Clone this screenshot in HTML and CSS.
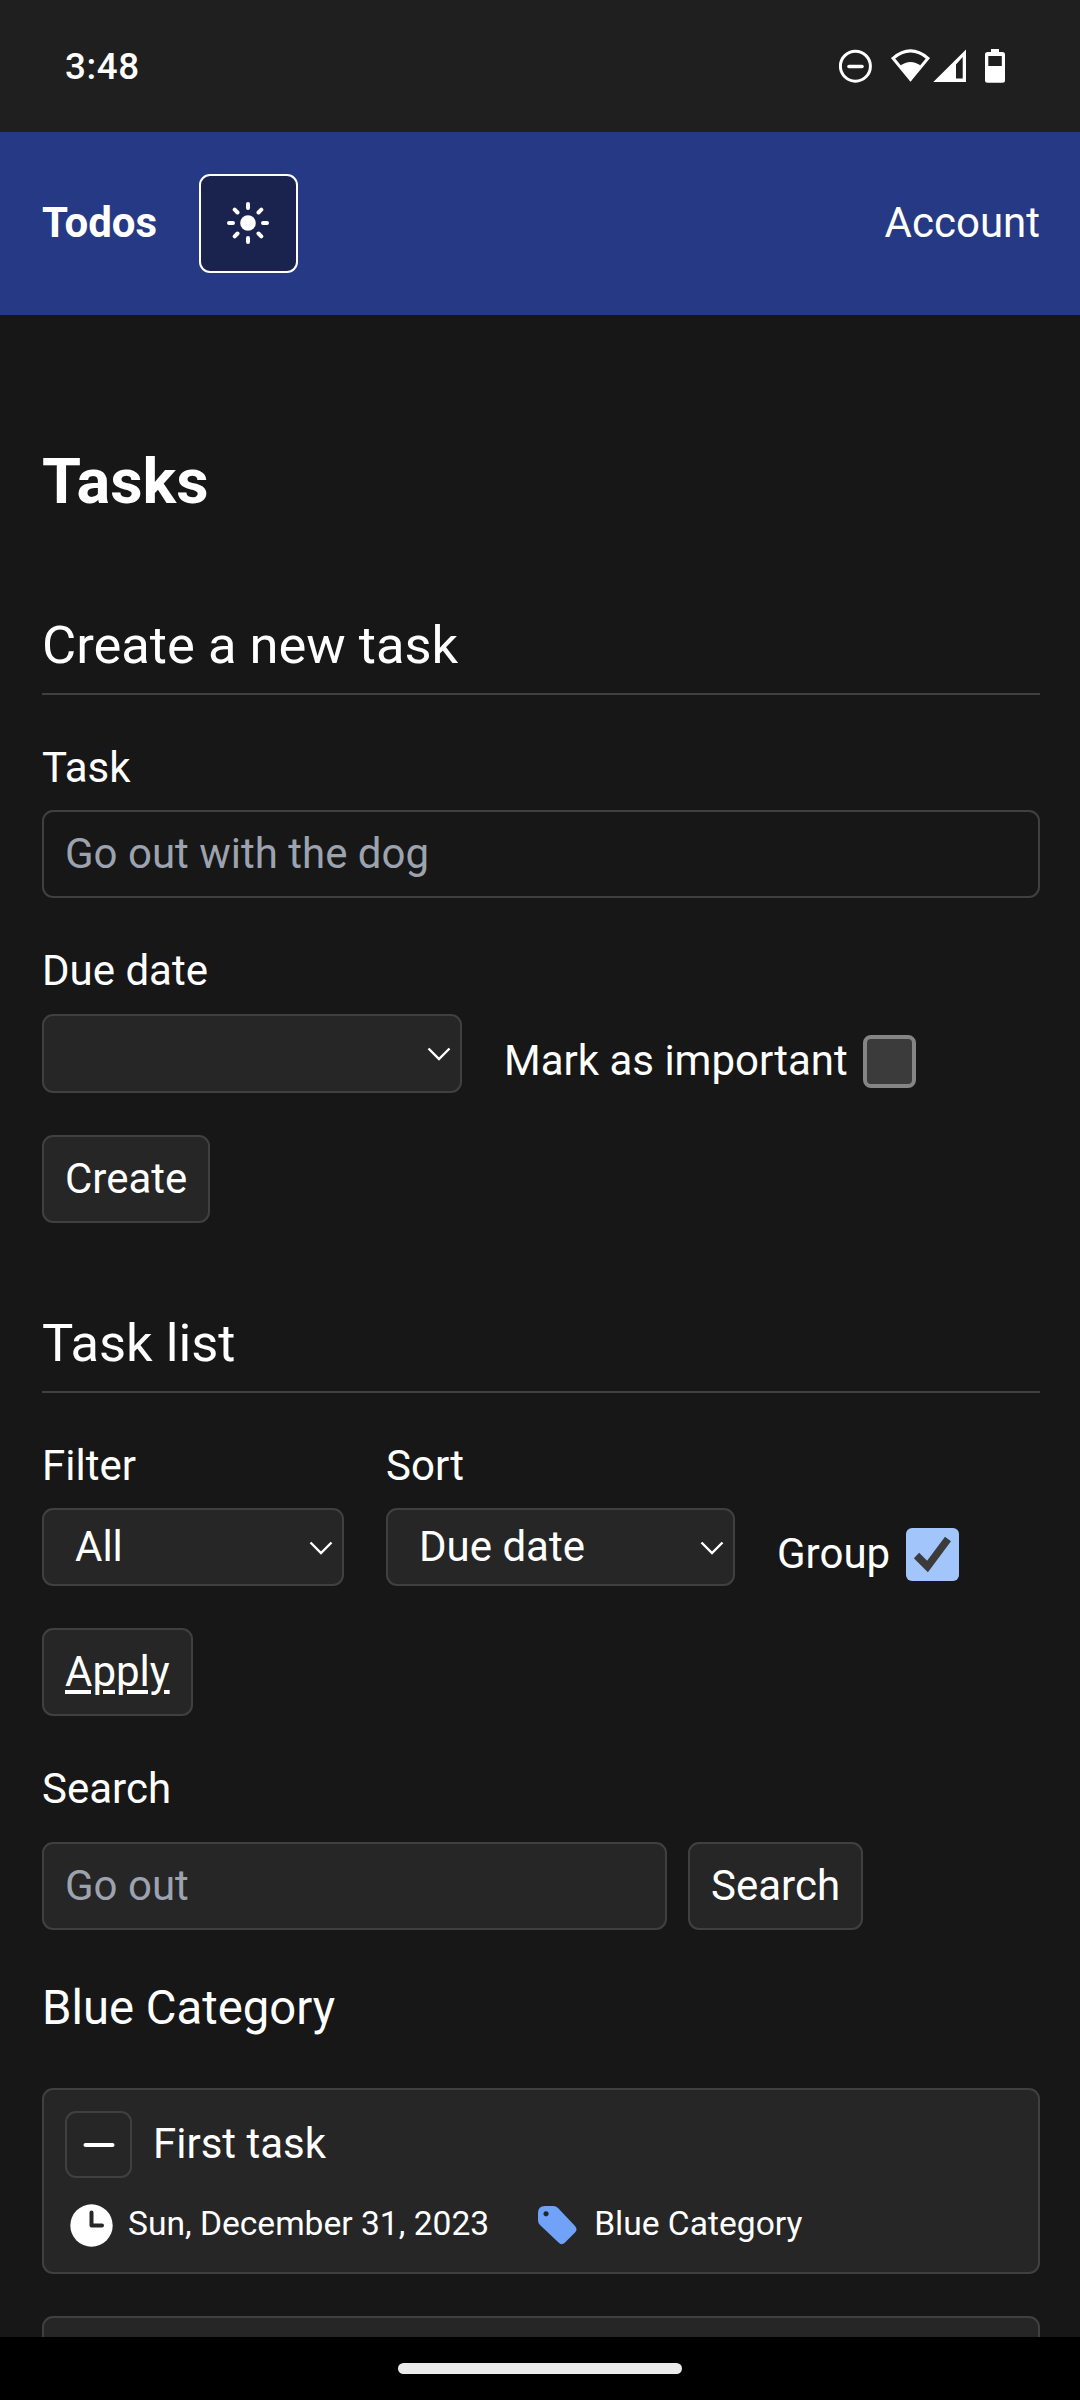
FILE: index.html
```html
<!DOCTYPE html>
<html lang="en">
<head>
<meta charset="utf-8">
<title>Todos</title>
<link rel="stylesheet" href="styles.css">
</head>
<body>
<div class="status">
  <span class="clock">3:48</span>
  <svg class="status-icons" width="170" height="36" viewBox="0 0 170 36">
    <circle cx="16.400" cy="18.200" r="15" fill="none" stroke="#fff" stroke-width="3"/>
    <path d="M10 18.500h13" stroke="#fff" stroke-width="3.600" stroke-linecap="round"/>
    <path d="M54 10.300Q71.500 -4.500 89 10.300L71.500 31.500Z" fill="none" stroke="#fff" stroke-width="3" stroke-linejoin="miter"/>
    <path d="M61 18Q71.500 10 82 18L71.500 33.500Z" fill="#fff"/>
    <path fill-rule="evenodd" d="M94.300 34L127 1.500V34ZM117 16.500V30.500H123.700V9Z" fill="#fff"/>
    <path fill-rule="evenodd" d="M152 1h8v3h3.500q2.500 0 2.500 2.500V32.300Q166 34.800 163.500 34.800H148.500Q146 34.800 146 32.300V6.500Q146 4 148.500 4H152ZM149.300 8V18H162.800V8Z" fill="#fff"/>
  </svg>
</div>
<header class="nav">
  <a class="brand">Todos</a>
  <button class="theme" aria-label="Toggle theme">
    <svg width="42" height="42" viewBox="0 0 42 42">
      <circle cx="21" cy="21" r="7.800" fill="#fff"/>
      <path d="M21 2v4M21 36v4M2 21h4M36 21h4M7.700 7.700l2.800 2.800M31.500 31.500l2.800 2.800M7.700 34.300l2.800-2.800M31.500 10.500l2.800-2.800" stroke="#fff" stroke-width="4" stroke-linecap="round"/>
    </svg>
  </button>
  <a class="account">Account</a>
</header>
<main class="page">
  <h1>Tasks</h1>
  <h2>Create a new task</h2>
  <form class="create">
    <label class="label">Task</label>
    <div class="box field">Go out with the dog</div>
    <div class="row due-row">
      <div class="group">
        <label class="label due-label">Due date</label>
        <div class="box select due"><svg class="chevron" width="24" height="14" viewBox="0 0 24 14"><path d="M1.500 1.500L12 12L22.500 1.500"/></svg></div>
      </div>
      <label class="check"><span class="check-text">Mark as important</span><span class="checkbox"></span></label>
    </div>
    <button type="button" class="box button">Create</button>
  </form>
  <h2 class="list-title">Task list</h2>
  <form class="filters">
    <div class="row">
      <div class="group">
        <label class="label">Filter</label>
        <div class="box select filter">All<svg class="chevron" width="24" height="14" viewBox="0 0 24 14"><path d="M1.500 1.500L12 12L22.500 1.500"/></svg></div>
      </div>
      <div class="group">
        <label class="label">Sort</label>
        <div class="box select sort">Due date<svg class="chevron" width="24" height="14" viewBox="0 0 24 14"><path d="M1.500 1.500L12 12L22.500 1.500"/></svg></div>
      </div>
      <label class="check"><span class="check-text">Group</span><svg class="checked" width="53" height="53" viewBox="0 0 53 53"><rect width="53" height="53" rx="6" fill="#a2c5fb"/><path d="M10.500 27.500L21.500 38.500L42 11" fill="none" stroke="#3b3b3b" stroke-width="7.500"/></svg></label>
    </div>
    <button type="button" class="box button apply">Apply</button>
  </form>
  <form class="search">
    <label class="label">Search</label>
    <div class="search-row">
      <div class="box field search-field">Go out</div>
      <button type="button" class="box button">Search</button>
    </div>
  </form>
  <h3>Blue Category</h3>
  <article class="box card">
    <div class="card-head">
      <span class="box toggle"><svg width="32" height="6" viewBox="0 0 32 6"><path d="M2.500 3h27" stroke="#fff" stroke-width="4" stroke-linecap="round"/></svg></span>
      <span class="task-name">First task</span>
    </div>
    <div class="meta">
      <svg class="time-icon" width="43" height="43" viewBox="0 0 43 43"><circle cx="21.500" cy="21.500" r="21.200" fill="#fff"/><path d="M21.500 8.500V21.500H32" fill="none" stroke="#262626" stroke-width="4" stroke-linecap="round" stroke-linejoin="round"/></svg>
      <span class="meta-text">Sun, December 31, 2023</span>
      <svg class="tag-icon" width="39" height="39" viewBox="0 0 39 39"><path fill-rule="evenodd" d="M7 0H15.500Q18 0 20 2L37 20Q40 23.500 37 26.500L26.500 37Q23.500 39.500 20.500 36.500L2 19Q0 17 0 14.500V7Q0 0 7 0ZM8 5.200a2.600 2.600 0 1 0 .1 0Z" fill="#70a2f7"/></svg>
      <span class="meta-text">Blue Category</span>
    </div>
  </article>
  <article class="box card next"></article>
</main>
<footer class="gesture"><span class="pill"></span></footer>
</body>
</html>
```
FILE: styles.css
```css
* { box-sizing: border-box; }
body {
  margin: 0;
  width: 1080px;
  height: 2400px;
  overflow: hidden;
  display: flex;
  flex-direction: column;
  background: #171717;
  color: #fff;
  font: 42px/63px Roboto, sans-serif;
}
svg { display: block; flex: none; }
.status {
  height: 132px;
  flex: none;
  padding: 0 71px 0 65px;
  display: flex;
  align-items: center;
  justify-content: space-between;
  background: #1f1f1f;
}
.clock { padding-top: 1px; font-size: 36.75px; font-weight: 500; letter-spacing: .6px; }
.nav {
  height: 183px;
  flex: none;
  padding: 0 40px 0 42px;
  display: flex;
  align-items: center;
  background: #263984;
}
.brand { font-weight: 700; }
.brand, .account { padding-bottom: 2px; }
.theme {
  width: 99px;
  height: 99px;
  margin-left: 42px;
  padding: 0 1px 1px 0;
  display: flex;
  align-items: center;
  justify-content: center;
  background: #1a234e;
  border: 2px solid #fff;
  border-radius: 11px;
}
.account { margin-left: auto; }
.page {
  flex: 1;
  min-height: 0;
  overflow: hidden;
  padding: 0 40px 0 42px;
}
h1, h2, h3 { margin: 0; font-weight: 400; }
h1 { margin-top: 124px; height: 84px; font-size: 63px; line-height: 86px; font-weight: 700; }
h2 {
  margin-top: 84px;
  height: 88px;
  font-size: 52.5px;
  line-height: 76px;
  border-bottom: 2px solid #404040;
}
.create, .filters { padding-top: 42px; }
.label { display: block; height: 63px; line-height: 61px; }
.due-label { height: 64px; }
.box { background: #262626; border: 2px solid #404040; border-radius: 11px; }
.field { height: 88px; margin-top: 10px; padding: 10px 21px; background: #171717; color: #9ca3af; }
.row { display: flex; gap: 42px; }
.due-row { margin-top: 42px; }
.select {
  height: 79px;
  margin-top: 10px;
  padding: 5px 9px 0 31px;
  display: flex;
  justify-content: space-between;
}
.due { width: 420px; justify-content: flex-end; }
.filter { width: 302px; height: 78px; }
.sort { width: 349px; height: 78px; }
.chevron { margin-top: 26px; fill: none; stroke: #fff; stroke-width: 2.400; }
.check { display: flex; align-items: center; gap: 15.5px; padding-top: 90px; line-height: 57px; }
.filters .check { padding-top: 88px; }
.check-text { padding-bottom: 2px; }
.checkbox { width: 53px; height: 53px; background: #3b3b3b; border: 4px solid #858585; border-radius: 8px; }
.button {
  display: block;
  height: 88px;
  margin-top: 42px;
  padding: 0 21px 2px;
  color: #fff;
  font: inherit;
}
.apply { text-decoration: underline; text-decoration-thickness: 4px; text-underline-offset: 4px; }
.list-title { margin-top: 82px; }
.search { padding-top: 42px; }
.search-row { display: flex; gap: 21px; margin-top: 21px; }
.search-row .box { margin-top: 0; }
.search-field { width: 625px; background: #262626; }
h3 { margin-top: 42px; height: 74px; font-size: 47.25px; line-height: 72px; }
.card { height: 186px; margin-top: 42px; padding: 21px; }
.card-head { display: flex; gap: 21px; height: 67px; }
.task-name { line-height: 65px; }
.toggle { width: 67px; height: 67px; display: flex; align-items: center; justify-content: center; }
.meta { display: flex; align-items: center; height: 48px; margin-top: 23px; font-size: 33.6px; line-height: 48px; }
.meta-text { padding-bottom: 2px; }
.time-icon { margin: 0 15px 0 5px; }
.tag-icon { margin: 1px 17px 0 49px; }
.gesture { height: 63px; flex: none; background: #000; display: flex; justify-content: center; padding-top: 26px; }
.pill { width: 284px; height: 11px; border-radius: 6px; background: #ebebeb; }
```
